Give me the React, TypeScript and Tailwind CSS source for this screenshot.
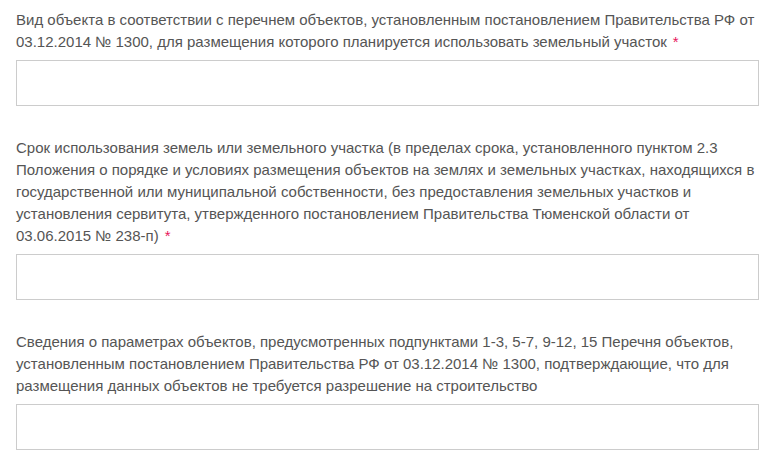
import React from "react";

function Field({ lines, required }: { lines: string[]; required?: boolean }) {
  return (
    <div className="flex flex-col gap-[7px]">
      <label className="block text-[15px] leading-[22px] text-[#555555]">
        {lines.map((l, i) => (
          <React.Fragment key={i}>
            {l}
            {i === lines.length - 1 && required ? (
              <span className="ml-[6px] text-[#e8175d]">*</span>
            ) : null}
            {i < lines.length - 1 ? <br /> : null}
          </React.Fragment>
        ))}
      </label>
      <input
        type="text"
        className="block h-[46px] w-full border border-[#cccccc] bg-white px-3 outline-none"
      />
    </div>
  );
}

export default function App() {
  return (
    <div
      className="min-h-[459px] w-[773px] bg-white pl-[16px] pr-[14px] pt-[9px]"
      style={{ fontFamily: '"Liberation Sans", Arial, sans-serif' }}
    >
      <div className="flex flex-col gap-[31px]">
        <Field
          required
          lines={[
            "Вид объекта в соответствии с перечнем объектов, установленным постановлением Правительства РФ от",
            "03.12.2014 № 1300, для размещения которого планируется использовать земельный участок",
          ]}
        />
        <Field
          required
          lines={[
            "Срок использования земель или земельного участка (в пределах срока, установленного пунктом 2.3",
            "Положения о порядке и условиях размещения объектов на землях и земельных участках, находящихся в",
            "государственной или муниципальной собственности, без предоставления земельных участков и",
            "установления сервитута, утвержденного постановлением Правительства Тюменской области от",
            "03.06.2015 № 238-п)",
          ]}
        />
        <Field
          lines={[
            "Сведения о параметрах объектов, предусмотренных подпунктами 1-3, 5-7, 9-12, 15 Перечня объектов,",
            "установленным постановлением Правительства РФ от 03.12.2014 № 1300, подтверждающие, что для",
            "размещения данных объектов не требуется разрешение на строительство",
          ]}
        />
      </div>
    </div>
  );
}
